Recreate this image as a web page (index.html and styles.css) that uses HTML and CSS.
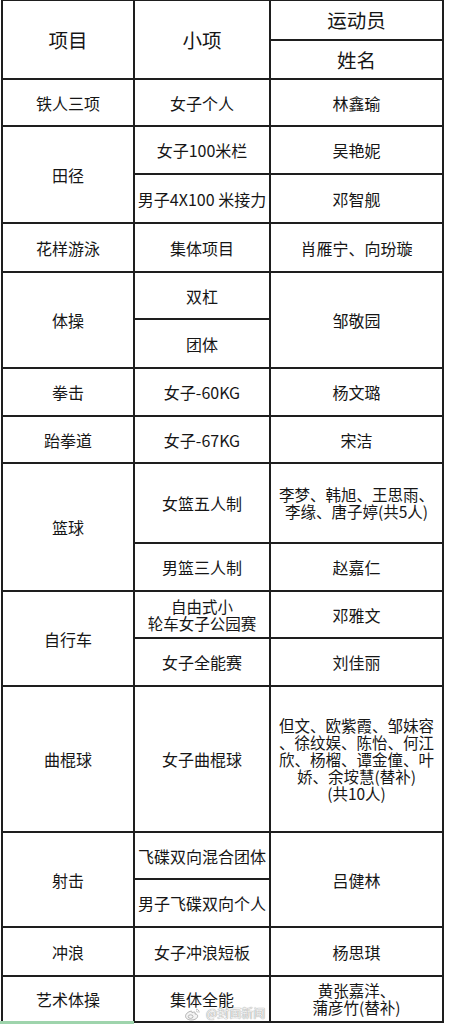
FILE: index.html
```html
<!DOCTYPE html>
<html lang="zh">
<head>
<meta charset="utf-8">
<title>运动员名单</title>
<link rel="stylesheet" href="styles.css">
</head>
<body>
<div class="page">
  <div class="sheet">
    <div class="cell head span2">项目</div>
    <div class="cell head span2">小项</div>
    <div class="cell head">运动员</div>
    <div class="cell head">姓名</div>

    <div class="cell">铁人三项</div>
    <div class="cell">女子个人</div>
    <div class="cell">林鑫瑜</div>

    <div class="cell span2">田径</div>
    <div class="cell">女子100米栏</div>
    <div class="cell">吴艳妮</div>
    <div class="cell">男子4X100 米接力</div>
    <div class="cell">邓智舰</div>

    <div class="cell">花样游泳</div>
    <div class="cell">集体项目</div>
    <div class="cell">肖雁宁、向玢璇</div>

    <div class="cell span2">体操</div>
    <div class="cell">双杠</div>
    <div class="cell span2">邹敬园</div>
    <div class="cell">团体</div>

    <div class="cell">拳击</div>
    <div class="cell">女子-60KG</div>
    <div class="cell">杨文璐</div>

    <div class="cell">跆拳道</div>
    <div class="cell">女子-67KG</div>
    <div class="cell">宋洁</div>

    <div class="cell span2">篮球</div>
    <div class="cell">女篮五人制</div>
    <div class="cell multi">李梦、韩旭、王思雨、<br>李缘、唐子婷(共5人)</div>
    <div class="cell">男篮三人制</div>
    <div class="cell">赵嘉仁</div>

    <div class="cell span2">自行车</div>
    <div class="cell multi">自由式小<br>轮车女子公园赛</div>
    <div class="cell">邓雅文</div>
    <div class="cell">女子全能赛</div>
    <div class="cell">刘佳丽</div>

    <div class="cell">曲棍球</div>
    <div class="cell">女子曲棍球</div>
    <div class="cell multi">但文、欧紫霞、邹妹容<br>、徐纹娱、陈怡、何江<br>欣、杨榴、谭金僮、叶<br>娇、余垵慧(替补)<br>(共10人)</div>

    <div class="cell span2">射击</div>
    <div class="cell">飞碟双向混合团体</div>
    <div class="cell span2">吕健林</div>
    <div class="cell">男子飞碟双向个人</div>

    <div class="cell">冲浪</div>
    <div class="cell">女子冲浪短板</div>
    <div class="cell">杨思琪</div>

    <div class="cell">艺术体操</div>
    <div class="cell">集体全能</div>
    <div class="cell multi">黄张嘉洋、<br>蒲彦竹(替补)</div>
  </div>

  <div class="watermark">
    <svg class="wb" width="17" height="14" viewBox="0 0 17 14">
      <path d="M7 4.2C4.2 4.6 1.2 7 1.6 9.6 2 12.2 5.6 13.4 8.8 12.9 12 12.4 14 10.6 13.6 8.6 13.3 7.2 11.8 6.9 11 7.1 11.6 5.6 11 4.6 9.4 5.2 8.6 5.5 8 5.8 8 5.8 8.2 4.6 7.9 4.1 7 4.2Z" fill="#f4f4f4" stroke="#a8a8a8" stroke-width="0.9"/>
      <ellipse cx="6.6" cy="9.6" rx="2.4" ry="1.8" fill="#f4f4f4" stroke="#a8a8a8" stroke-width="0.8"/>
      <path d="M12 2.2C13.8 2.1 15.4 3.6 15 5.6" fill="none" stroke="#b0b0b0" stroke-width="0.9"/>
      <path d="M12 4C12.9 4 13.5 4.6 13.4 5.4" fill="none" stroke="#b0b0b0" stroke-width="0.9"/>
    </svg>
    <span class="wm-text">@封面新闻</span>
  </div>
  <div class="greenbar"></div>
</div>
</body>
</html>
```

FILE: styles.css
```css
html, body {
  margin: 0;
  padding: 0;
  background: #ffffff;
}

.page {
  position: relative;
  width: 452px;
  height: 1024px;
  overflow: hidden;
  background: #ffffff;
}

.sheet {
  display: grid;
  width: max-content;
  margin-left: 1px;
  padding: 1px 2px 2px 2px;
  gap: 2px;
  background: #1e1e1e;
  grid-template-columns: 130px 134px 171px;
  grid-template-rows: 38px 37px 45px 46px 47px 47px 45px 47px 46px 45px 78px 46px 45px 46px 144px 45px 46px 47px 44px;
  font-family: "Noto Sans CJK SC", "Noto Sans", sans-serif;
  color: #161616;
}

.cell {
  background: #ffffff;
  display: flex;
  align-items: center;
  justify-content: center;
  text-align: center;
  white-space: nowrap;
  font-size: 16px;
  line-height: 18px;
}

.span2 {
  grid-row: span 2;
}

.head {
  font-size: 19.5px;
  line-height: 22px;
}

.multi {
  font-size: 15.5px;
  line-height: 17px;
}

.watermark {
  position: absolute;
  left: 184px;
  top: 1001px;
  display: flex;
  align-items: center;
  gap: 5px;
}

.wb {
  display: block;
  margin-top: 6px;
}

.wm-text {
  font-family: "Noto Sans CJK SC", sans-serif;
  font-size: 12px;
  line-height: 14px;
  color: #f2f2f2;
  text-shadow: 0 0 1px #9a9a9a, 0 0 1px #9a9a9a;
  margin-top: 4px;
}

.greenbar {
  position: absolute;
  left: 0;
  top: 1021px;
  width: 134px;
  height: 3px;
  background: #9ed4ac;
}
```
